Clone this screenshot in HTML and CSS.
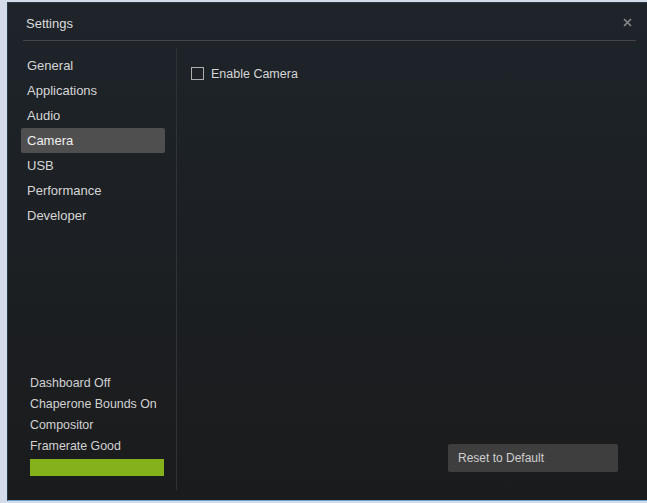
FILE: index.html
```html
<!DOCTYPE html>
<html lang="en">
<head>
    <meta charset="UTF-8">
    <meta name="viewport" content="width=device-width, initial-scale=1.0">
    <title>Settings</title>
    <link rel="stylesheet" href="styles.css">
</head>
<body>

    <div class="dialog">
        <div class="header">
            <span class="title">Settings</span>
            <button class="close" title="Close">
                <svg width="9" height="9" viewBox="0 0 9 9">
                    <path d="M1 1 L8 8 M8 1 L1 8" stroke="#8a8a8a" stroke-width="1.6" fill="none"/>
                </svg>
            </button>
        </div>

        <div class="main">
            <!-- Menu a sinistra -->
            <div class="sidebar">
                <ul class="menu">
                    <li>General</li>
                    <li>Applications</li>
                    <li>Audio</li>
                    <li class="active">Camera</li>
                    <li>USB</li>
                    <li>Performance</li>
                    <li>Developer</li>
                </ul>

                <div class="status">
                    <div>Dashboard Off</div>
                    <div>Chaperone Bounds On</div>
                    <div>Compositor</div>
                    <div>Framerate Good</div>
                    <div class="status-bar"></div>
                </div>
            </div>

            <!-- Contenuto -->
            <div class="content">
                <label class="option">
                    <span class="checkbox"></span>
                    Enable Camera
                </label>
                <div class="footer">
                    <button class="reset">Reset to Default</button>
                </div>
            </div>
        </div>
    </div>

</body>
</html>
```

FILE: styles.css
```css
body {
    margin: 0;
    background-color: #d3dce8;
    font-family: "Liberation Sans", Arial, sans-serif;
    overflow: hidden;
}
.dialog {
    margin: 2px 0 0 7px;
    width: 640px;
    height: 499px;
    box-sizing: border-box;
    display: flex;
    flex-direction: column;
    background: linear-gradient(#1e242a, #1a1b1c);
    border-left: 1px solid #26394b;
    border-top: 1px solid #26394b;
    border-bottom: 1px solid #6d9fcf;
}
.header {
    height: 37px;
    margin: 0 11px 0 15px;
    display: flex;
    align-items: center;
    justify-content: space-between;
    border-bottom: 1px solid #464646;
}
.title {
    color: #dcdcdc;
    font-size: 13px;
    padding-left: 3px;
    padding-top: 3px;
}
.close {
    background: none;
    border: none;
    padding: 0;
    margin-right: 4px;
    margin-top: 2px;
    width: 9px;
    height: 9px;
    display: flex;
    cursor: pointer;
}
.main {
    flex: 1;
    display: flex;
    padding: 7px 0 10px 13px;
}
.sidebar {
    width: 155px;
    border-right: 1px solid #303336;
    display: flex;
    flex-direction: column;
}
.menu {
    list-style: none;
    margin: 0;
    padding: 5px 0 0 0;
}
.menu li {
    width: 144px;
    height: 25px;
    line-height: 25px;
    box-sizing: border-box;
    padding-left: 6px;
    font-size: 13px;
    color: #d6d6d6;
    border-radius: 2px;
    cursor: pointer;
}
.menu li.active {
    background-color: #4f4f4f;
    color: #f0f0f0;
}
.status {
    margin-top: auto;
    padding: 0 0 14px 9px;
    font-size: 12.4px;
    color: #d2d2d2;
}
.status div {
    height: 21px;
    line-height: 23px;
}
.status .status-bar {
    width: 134px;
    height: 17px;
    margin-top: 3px;
    background-color: #85b11b;
}
.content {
    flex: 1;
    display: flex;
    flex-direction: column;
    padding: 19px 29px 18px 14px;
}
.option {
    display: flex;
    align-items: center;
    gap: 7px;
    font-size: 12.5px;
    color: #d6d6d6;
    height: 13px;
}
.checkbox {
    width: 13px;
    height: 13px;
    box-sizing: border-box;
    border: 1px solid #aeaeae;
}
.footer {
    margin-top: auto;
    display: flex;
    justify-content: flex-end;
}
.reset {
    width: 170px;
    height: 28px;
    border: none;
    border-radius: 2px;
    background-color: #3e3e3e;
    color: #cfcfcf;
    font-family: "Liberation Sans", Arial, sans-serif;
    font-size: 12px;
    text-align: left;
    padding: 0 0 0 10px;
    cursor: pointer;
}
```
